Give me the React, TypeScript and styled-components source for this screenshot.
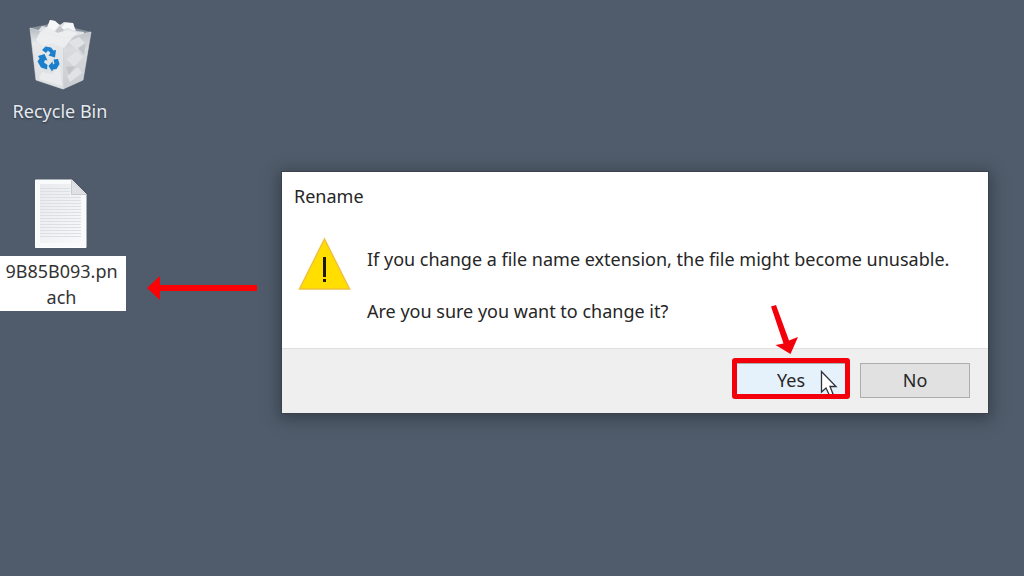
import React from "react";
import styled, { createGlobalStyle } from "styled-components";

const GlobalStyle = createGlobalStyle`
  *, *::before, *::after { box-sizing: border-box; }
  body {
    margin: 0;
    background: #505c6b;
    font-family: "Noto Sans", "Open Sans", sans-serif;
    font-size: 18px;
    line-height: 26px;
    color: #262626;
  }
`;

const Desktop = styled.main`
  position: relative;
  min-height: 100vh;
  overflow: hidden;
  background: #505c6b;
`;

const IconColumn = styled.div`
  display: flex;
  flex-direction: column;
  gap: 55px;
  padding-top: 16px;
`;

const DesktopItem = styled.div`
  display: flex;
  flex-direction: column;
  align-items: center;
  gap: 6px;
  width: 120px;
  svg { display: block; }
`;

const ItemLabel = styled.span`
  color: #e6eaf0;
  text-shadow: 0 1px 2px #2c3540;
`;

const FileItem = styled.div`
  display: flex;
  flex-direction: column;
  gap: 7px;
  width: 126px;
  svg { display: block; margin-left: 35px; }
`;

const NameEditor = styled.textarea`
  display: block;
  width: 100%;
  height: 55px;
  margin: 0;
  padding: 1px 4px 0 2px;
  border: 1px solid #fff;
  border-left: 0;
  outline: 0;
  resize: none;
  overflow: hidden;
  background: #fff;
  color: #333;
  font: inherit;
  text-align: center;
  word-break: break-all;
`;

const Dialog = styled.section`
  position: absolute;
  top: 171px;
  left: 281px;
  right: 35px;
  border: 1px solid #3b424c;
  background: #fff;
  box-shadow: 0 3px 14px 2px rgba(30, 36, 46, 0.5);
`;

const Title = styled.h1`
  margin: 0;
  padding: 11px 12px 0;
  font-size: 18px;
  font-weight: 400;
`;

const Body = styled.div`
  display: flex;
  gap: 16px;
  padding: 28px 16px 23px;
  svg { flex: none; }
`;

const Message = styled.div`
  display: flex;
  flex-direction: column;
  gap: 26px;
  padding: 9px 0 1px;
  white-space: nowrap;
  p { margin: 0; }
`;

const Footer = styled.footer`
  display: flex;
  justify-content: flex-end;
  gap: 14px;
  padding: 14px 18px 15px;
  border-top: 1px solid #dfdfdf;
  background: #efefef;
`;

const Button = styled.button<{ $active?: boolean }>`
  width: 110px;
  height: 35px;
  padding: 0 0 2px;
  border: 1px solid #adadad;
  background: ${(p) => (p.$active ? "#e5f1fb" : "#e1e1e1")};
  color: inherit;
  font: inherit;
`;

const Marked = styled.div`
  position: relative;
  &::after {
    content: "";
    position: absolute;
    inset: -5px -4px -1px;
    border: 5px solid #f4000c;
    border-radius: 3px;
    pointer-events: none;
  }
`;

const Overlay = styled.svg<{ $x: number; $y: number }>`
  position: absolute;
  left: ${(p) => p.$x}px;
  top: ${(p) => p.$y}px;
  pointer-events: none;
`;

function BinIcon() {
  return (
    <svg width="66" height="76" viewBox="27 16 66 76" aria-hidden="true">
      <defs>
        <linearGradient id="binLeft" x1="0" y1="0" x2="0" y2="1">
          <stop offset="0" stopColor="#b4bac1" />
          <stop offset="0.25" stopColor="#e6e8ea" />
          <stop offset="1" stopColor="#dcdfe2" />
        </linearGradient>
        <linearGradient id="binRight" x1="0" y1="0" x2="0" y2="1">
          <stop offset="0" stopColor="#bfc3c9" />
          <stop offset="0.3" stopColor="#d9dbde" />
          <stop offset="1" stopColor="#c9ccd0" />
        </linearGradient>
      </defs>
      <path d="M30 28 L54 23 L91 32 L64 38 Z" fill="#88919c" />
      <path d="M37 32 L42 26 L47 27 L50 20 L55 21 L60 25 L64 22 L73 23 L76 31 L84 32 L82 42 L40 42 Z" fill="#dfe1e4" />
      <path d="M50 20 L55 21 L59 25 L55 31 L47 29 Z M65 23 L73 23 L75 31 L68 28 L60 30 Z" fill="#f6f7f8" />
      <path d="M55 31 L60 26 L64 30 L61 35 Z" fill="#c4c8cd" />
      <path d="M30 28 L64 38 L63 89 L36 80 Z" fill="url(#binLeft)" />
      <path d="M64 38 L91 32 L83 80 L63 89 Z" fill="url(#binRight)" />
      <path d="M40 32 L48 27 L57 33 L68 30 L78 33 L72 38 L64 48 L52 43 L43 46 L36 40 Z" fill="#eceef0" />
      <path d="M68 42 L79 37 L85 43 L77 50 Z M66 59 L77 51 L83 57 L74 67 Z M67 76 L78 67 L82 73 L70 82 Z" fill="#e0e2e5" />
      <path d="M78 48 L86 43 L84 55 Z M66 67 L75 66 L69 75 Z" fill="#c1c4c9" />
      <path d="M42 72 L52 74 L60 66 L62 86 L39 79 Z" fill="#e9ebed" />
      <path d="M30 28 L64 38 L91 32 M64 38 L63 89 M30 28 L36 80 L63 89 L83 80 L91 32" fill="none" stroke="#e6e8ea" strokeWidth="1" strokeOpacity="0.6" />
      <g fill="#1b7fcb">
        <path d="M42 50 L45.500 46.500 L51 47.500 L53.500 50.500 L56 50 L55 57.500 L48.500 55.500 L50.500 53 L48 50.500 L46 53 Z" />
        <path d="M38 56 L44.500 54 L47.500 60.500 L45 60 L44 62.500 L47.500 65 L47 69.500 L41 67.500 L37.500 61.500 L39.500 58.500 Z" />
        <path d="M53.500 59.500 L58 59 L59.500 64 L56.500 69 L53 69.500 L52 71.500 L48.500 66 L52.500 61.500 L53 64.500 L54.500 63.500 Z" />
      </g>
    </svg>
  );
}

function FileIcon() {
  const rows = Array.from({ length: 17 }, (_, i) => 9 + i * 3);
  return (
    <svg width="52" height="70" viewBox="0 0 52 70" aria-hidden="true">
      <defs>
        <linearGradient id="page" x1="0" y1="0" x2="1" y2="1">
          <stop offset="0" stopColor="#e9eaed" />
          <stop offset="1" stopColor="#f8f9fa" />
        </linearGradient>
      </defs>
      <path d="M0.5 1 H37 L51 15 V68.500 H0.500 Z" fill="#f9fafb" stroke="#fff" />
      <path d="M5 5 H36 V16 H46 V64 H5 Z" fill="url(#page)" />
      {rows.map((y) => (
        <path key={y} d={`M5 ${y}.5 H${y < 17 ? 35 : 46}`} stroke="#dcdfe3" />
      ))}
      <path d="M36.500 1 L51 15.500 H36.500 Z" fill="#dfe1e4" stroke="#c8cbcf" />
    </svg>
  );
}

function WarningIcon() {
  return (
    <svg width="53" height="54" viewBox="0 0 53 54" role="img" aria-label="Warning">
      <path d="M26.500 2 L51.500 52 H1.500 Z" fill="#ffde00" stroke="#efc13c" strokeWidth="1.500" />
      <path d="M25 20 H28 V40 H25 Z M25 42 H28 V45 H25 Z" fill="#1c1a08" />
    </svg>
  );
}

export default function App() {
  return (
    <>
      <GlobalStyle />
      <Desktop>
        <IconColumn>
          <DesktopItem>
            <BinIcon />
            <ItemLabel>Recycle Bin</ItemLabel>
          </DesktopItem>
          <FileItem>
            <FileIcon />
            <NameEditor aria-label="File name" spellCheck={false} defaultValue="9B85B093.pnach" />
          </FileItem>
        </IconColumn>

        <Overlay $x={146} $y={275} width="112" height="26" viewBox="0 0 112 26" aria-hidden="true">
          <path d="M1 13 L14 1 V10 H111 V16 H14 V25 Z" fill="#fb0207" />
        </Overlay>

        <Dialog role="dialog" aria-labelledby="dialog-title">
          <Title id="dialog-title">Rename</Title>
          <Body>
            <WarningIcon />
            <Message>
              <p>If you change a file name extension, the file might become unusable.</p>
              <p>Are you sure you want to change it?</p>
            </Message>
          </Body>
          <Footer>
            <Marked>
              <Button type="button" $active>Yes</Button>
              <Overlay $x={84} $y={7} width="18" height="27" viewBox="0 0 18 27" aria-hidden="true">
                <path d="M1.500 1.500 V22 L6 18 L9.500 25.500 L13 24 L10 16.500 H16 Z" fill="#fff" stroke="#2e323b" strokeWidth="1.300" />
              </Overlay>
              <Overlay $x={34} $y={-59} width="29" height="52" viewBox="0 0 29 52" aria-hidden="true">
                <path d="M1 2.500 L6 1 L19 36.500 L28 33 L20.500 50 L5.500 41 L13.500 39.500 Z" fill="#f4000c" />
              </Overlay>
            </Marked>
            <Button type="button">No</Button>
          </Footer>
        </Dialog>
      </Desktop>
    </>
  );
}
